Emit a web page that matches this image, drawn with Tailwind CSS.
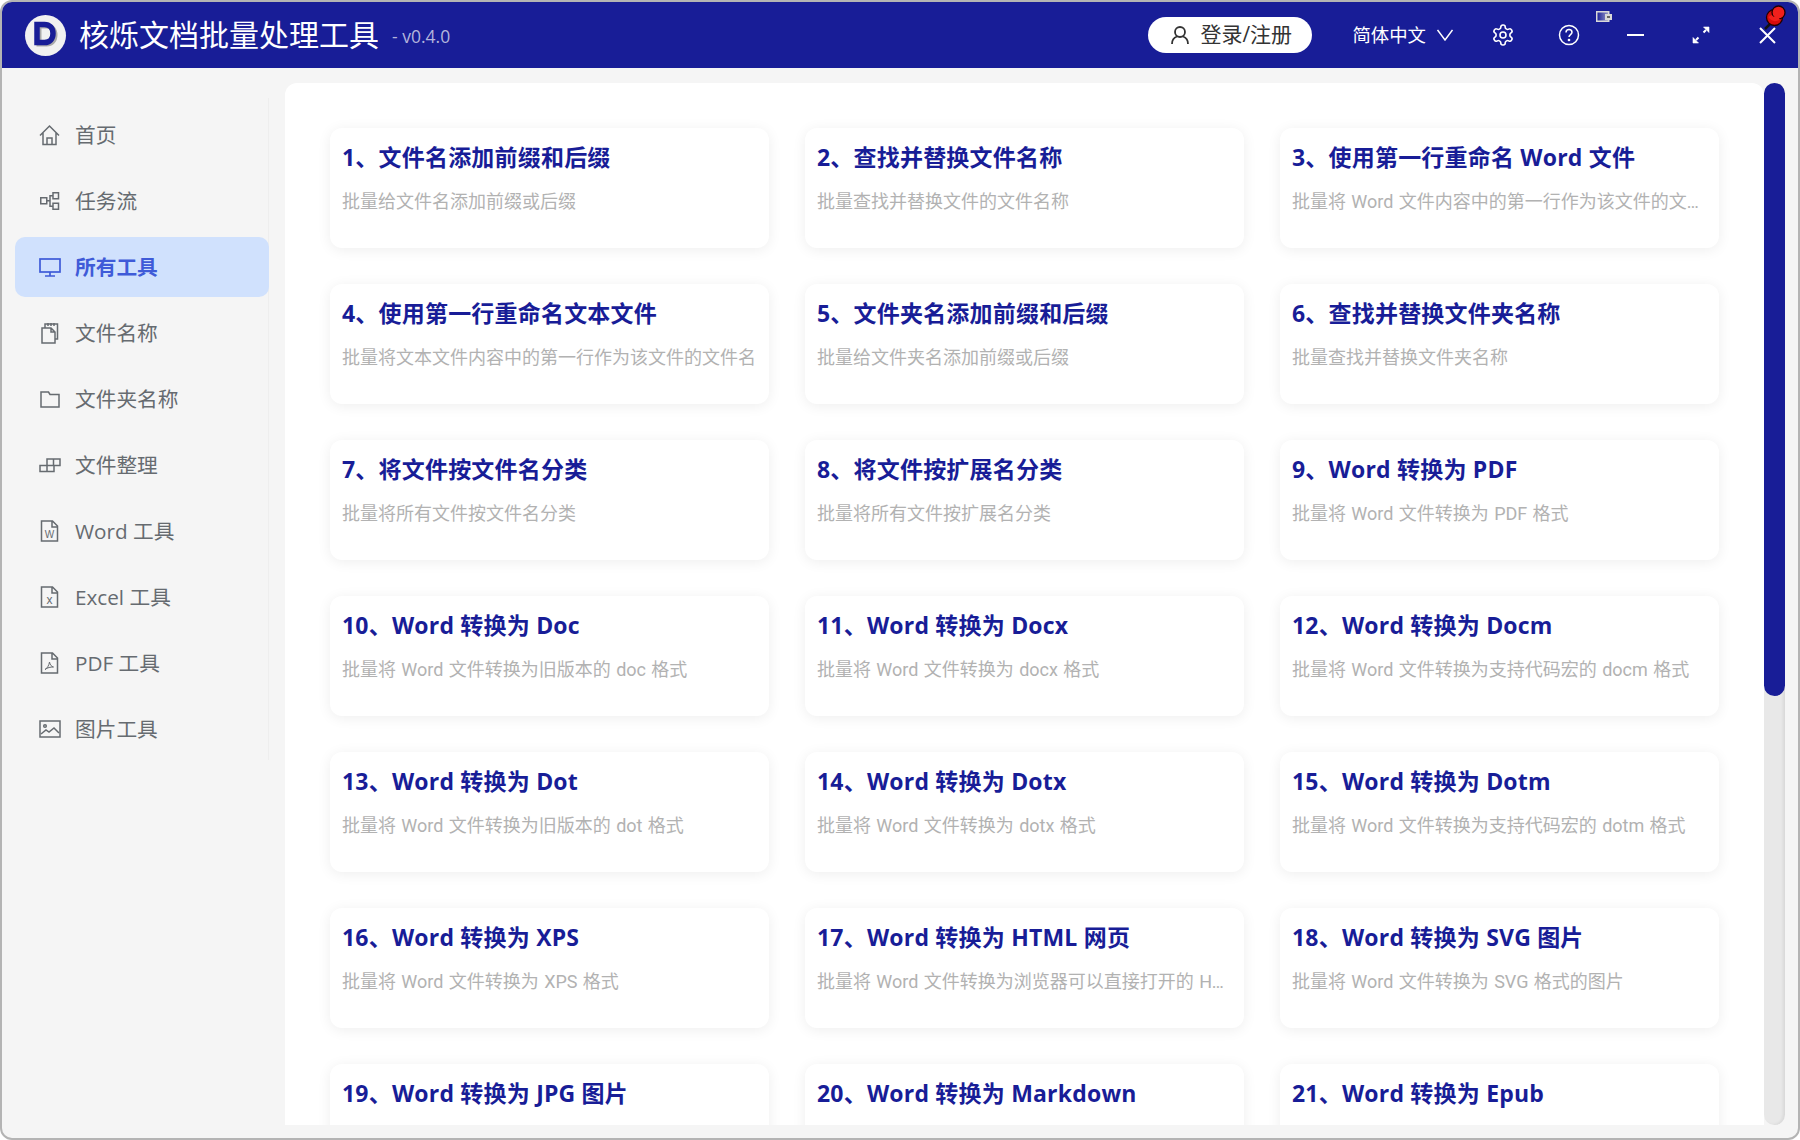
<!DOCTYPE html>
<html lang="zh-CN">
<head>
<meta charset="UTF-8">
<title>核烁文档批量处理工具</title>
<script src="https://cdn.jsdelivr.net/npm/@tailwindcss/browser@4"></script>
</head>
<body class="bg-white">
<div class="relative w-[1800px] h-[1140px] flex flex-col overflow-hidden rounded-[12px] border-2 border-[#b4b4b4] bg-[#f5f5f5] font-['Open_Sans','Noto_Sans_CJK_SC',sans-serif]">

  <!-- title bar -->
  <header class="h-[66px] shrink-0 flex items-center bg-[#181d97] text-white">
    <div class="ml-[23px] w-[41px] h-[41px] rounded-full bg-[#f1f1f1] flex items-center justify-center">
      <svg width="26" height="28" viewBox="0 0 26 28"><path d="M6 5h7.5c5.200 0 8.500 3.600 8.500 9s-3.300 9-8.500 9H6z" fill="none" stroke="#aaa" stroke-width="5"/><path d="M4 3.500h7.500c5.200 0 8.500 3.600 8.500 9s-3.300 9-8.500 9H4z" fill="none" stroke="#181d97" stroke-width="5.500"/></svg>
    </div>
    <h1 class="ml-[13px] text-[30px] leading-[40px] font-normal">核烁文档批量处理工具</h1>
    <span class="ml-[13px] mt-[3px] text-[17.500px] text-[#b3b5dc]">- v0.4.0</span>

    <div class="ml-auto flex items-center">
      <button class="w-[164px] h-[36px] rounded-full bg-white flex items-center pl-[23px] gap-[11px] text-[#333] text-[21px]">
        <svg width="18" height="18" viewBox="0 0 18 18" fill="none" stroke="#333" stroke-width="1.800"><circle cx="9" cy="6" r="5"/><path d="M1 18c0-4 2-6.500 5-7.500M17 18c0-4-2-6.500-5-7.500"/></svg>
        <span>登录/注册</span>
      </button>
      <div class="ml-[40px] flex items-center text-[18.400px]">
        <span>简体中文</span>
        <svg class="ml-[11px] mr-[17px]" width="16" height="16" viewBox="0 0 16 16" fill="none" stroke="#fff" stroke-width="1.500"><path d="M.5 3 8 13l7.500-10"/></svg>
      </div>
      <div class="w-[66px] flex justify-center">
        <svg width="24" height="24" viewBox="0 0 24 24" fill="none" stroke="#fff" stroke-width="1.600"><path d="M12.220 2h-.44a2 2 0 0 0-2 2v.18a2 2 0 0 1-1 1.730l-.43.25a2 2 0 0 1-2 0l-.15-.08a2 2 0 0 0-2.730.73l-.22.38a2 2 0 0 0 .73 2.730l.15.1a2 2 0 0 1 1 1.720v.51a2 2 0 0 1-1 1.740l-.15.09a2 2 0 0 0-.73 2.730l.22.38a2 2 0 0 0 2.730.73l.15-.08a2 2 0 0 1 2 0l.43.25a2 2 0 0 1 1 1.730V20a2 2 0 0 0 2 2h.44a2 2 0 0 0 2-2v-.18a2 2 0 0 1 1-1.730l.43-.25a2 2 0 0 1 2 0l.15.08a2 2 0 0 0 2.730-.73l.22-.39a2 2 0 0 0-.73-2.730l-.15-.08a2 2 0 0 1-1-1.740v-.5a2 2 0 0 1 1-1.740l.15-.09a2 2 0 0 0 .73-2.730l-.22-.38a2 2 0 0 0-2.730-.73l-.15.08a2 2 0 0 1-2 0l-.43-.25a2 2 0 0 1-1-1.730V4a2 2 0 0 0-2-2z"/><circle cx="12" cy="12" r="3"/></svg>
      </div>
      <div class="w-[66px] flex justify-center">
        <svg width="22" height="22" viewBox="0 0 22 22" fill="none" stroke="#fff" stroke-width="1.500"><circle cx="11" cy="11" r="9.500"/><path d="M8 8.500c0-1.800 1.400-3 3-3s3 1.200 3 2.800c0 2.200-3 2.400-3 4.700"/><circle cx="11" cy="16" r=".6" fill="#fff"/></svg>
      </div>
      <div class="w-[66px] flex justify-center">
        <svg width="17" height="18" viewBox="0 0 17 18" stroke="#fff" stroke-width="2"><path d="M0 9h17"/></svg>
      </div>
      <div class="w-[66px] flex justify-center">
        <svg width="18" height="18" viewBox="0 0 18 18" fill="#fff" stroke="#fff"><path d="M11.500 6.500 14 4M6.500 11.500 4 14" fill="none" stroke-width="2"/><path d="M17 1v5.500L11.500 1zM1 17v-5.500L6.500 17z" stroke-width=".6"/></svg>
      </div>
      <div class="w-[64px] pl-[2px] flex justify-center">
        <svg width="17" height="17" viewBox="0 0 17 17" stroke="#fff" stroke-width="2"><path d="M1 1l15 15M16 1 1 16"/></svg>
      </div>
    </div>
  </header>

  <!-- window snap widget and pin sit over the title bar -->
  <svg class="absolute left-[1594px] top-[9px]" width="16" height="11" viewBox="0 0 16 11">
    <defs><linearGradient id="snap"><stop offset="0" stop-color="#181d97"/><stop offset="1" stop-color="#9a9cc8"/></linearGradient></defs>
    <rect x=".75" y=".75" width="12" height="9.500" fill="url(#snap)" stroke="#d8d8d8" stroke-width="1.500"/>
    <rect x="9" y="3" width="7" height="6" fill="#d8d8d8"/>
    <rect x="11" y="5" width="3" height="2" fill="#666"/>
  </svg>
  <svg class="absolute left-[1761px] top-[2px]" width="24" height="26" viewBox="0 0 24 26">
    <path d="M2 25l5-5" stroke="#111" stroke-width="2.500"/>
    <circle cx="11.500" cy="13.500" r="8" fill="#d80c0c" stroke="#200" stroke-width="1.300"/>
    <circle cx="15.500" cy="8.500" r="6.500" fill="#f2201c" stroke="#200" stroke-width="1.300"/>
    <path d="M7 12c2 3 5 4 9 2" fill="none" stroke="#f2201c" stroke-width="4"/>
  </svg>

  <main class="flex-1 flex min-h-0">
    <!-- sidebar -->
    <aside class="w-[283px] shrink-0 pt-[30px] pl-[13px] pr-[16px]">
      <nav class="h-[662px] border-r border-[#eeeeee] pt-[7px] flex flex-col gap-[6px] text-[20.700px] text-[#666b70]">
        <a class="h-[60px] flex items-center pl-[24px] gap-[14px]">
          <svg class="w-[22px] h-[22px]" viewBox="0 0 22 22" fill="none" stroke="#666b70" stroke-width="1.500"><path d="M1 11.500 10.500 2l9.500 9.500M4 9v11.500h13V9M8 20.500V14h5v6.500"/></svg>
          <span class="pt-[2px]">首页</span>
        </a>
        <a class="h-[60px] flex items-center pl-[24px] gap-[14px]">
          <svg class="w-[22px] h-[22px]" viewBox="0 0 22 22" fill="none" stroke="#666b70" stroke-width="1.500"><rect x="1.750" y="7.750" width="6" height="6"/><rect x="14" y="2.750" width="5.500" height="6"/><rect x="14" y="13.250" width="5.500" height="6"/><path d="M8 10.750h3V5.750h3M11 10.750v5.500h3"/></svg>
          <span class="pt-[2px]">任务流</span>
        </a>
        <a class="h-[60px] -mr-[1px] flex items-center pl-[24px] gap-[14px] rounded-[10px] bg-[#d0e1fd] text-[#3f5bd8] font-bold">
          <svg class="w-[22px] h-[22px]" viewBox="0 0 22 22" fill="none" stroke="#3f5bd8" stroke-width="1.700"><rect x="1" y="3" width="20" height="13"/><path d="M11 16v4M6 20h10"/></svg>
          <span class="pt-[2px]">所有工具</span>
        </a>
        <a class="h-[60px] flex items-center pl-[24px] gap-[14px]">
          <svg class="w-[22px] h-[22px]" viewBox="0 0 22 22" fill="none" stroke="#666b70" stroke-width="1.500"><path d="M3 6h9l4 4v11H3zM12 6v4h4M6 6V2h12.500v15H16M9 1v3M12 1v3M15 1v3"/></svg>
          <span class="pt-[2px]">文件名称</span>
        </a>
        <a class="h-[60px] flex items-center pl-[24px] gap-[14px]">
          <svg class="w-[22px] h-[22px]" viewBox="0 0 22 22" fill="none" stroke="#666b70" stroke-width="1.500"><path d="M2 4h7.500l1.500 2.500h9v12.500H2z"/></svg>
          <span class="pt-[2px]">文件夹名称</span>
        </a>
        <a class="h-[60px] flex items-center pl-[24px] gap-[14px]">
          <svg class="w-[22px] h-[22px]" viewBox="0 0 22 22" fill="none" stroke="#666b70" stroke-width="1.500"><path d="M1 11.500h14v6H1zM8 11.500v6M8 11.500V5h13v6.500h-6M14.500 5v6.500"/></svg>
          <span class="pt-[2px]">文件整理</span>
        </a>
        <a class="h-[60px] flex items-center pl-[24px] gap-[14px]">
          <svg class="w-[22px] h-[22px]" viewBox="0 0 22 22" fill="none" stroke="#666b70" stroke-width="1.500"><path d="M2.500 1h11l5 5v15h-16zM13 1v6h5.500"/><text x="10.500" y="17.500" text-anchor="middle" font-size="10" font-family="Liberation Sans" fill="#666b70" stroke="none">W</text></svg>
          <span class="pt-[2px]">Word 工具</span>
        </a>
        <a class="h-[60px] flex items-center pl-[24px] gap-[14px]">
          <svg class="w-[22px] h-[22px]" viewBox="0 0 22 22" fill="none" stroke="#666b70" stroke-width="1.500"><path d="M2.500 1h11l5 5v15h-16zM13 1v6h5.500"/><text x="10.500" y="17.500" text-anchor="middle" font-size="12" font-family="Liberation Sans" fill="#666b70" stroke="none">x</text></svg>
          <span class="pt-[2px]">Excel 工具</span>
        </a>
        <a class="h-[60px] flex items-center pl-[24px] gap-[14px]">
          <svg class="w-[22px] h-[22px]" viewBox="0 0 22 22" fill="none" stroke="#666b70" stroke-width="1.500"><path d="M2.500 1h11l5 5v15h-16zM13 1v6h5.500"/><path d="M6 17.500c2-1 4-4 4.500-7.500.5 3 2 4.500 4 5-3 0-6 .5-8.500 2.500z" stroke-width="1"/></svg>
          <span class="pt-[2px]">PDF 工具</span>
        </a>
        <a class="h-[60px] flex items-center pl-[24px] gap-[14px]">
          <svg class="w-[22px] h-[22px]" viewBox="0 0 22 22" fill="none" stroke="#666b70" stroke-width="1.500"><rect x="1" y="3" width="20" height="16"/><circle cx="6" cy="8" r="1.300"/><path d="m2 16 5-4 3 2 5-4 5 5"/></svg>
          <span class="pt-[2px]">图片工具</span>
        </a>
      </nav>
    </aside>

    <!-- tool cards -->
    <section class="flex-1 h-[1042px] mt-[15px] rounded-t-[12px] bg-white overflow-hidden pl-[45px] pt-[45px]">
      <div id="cards" class="grid grid-cols-[439px_439px_439px] gap-x-[36px] gap-y-[36px]"></div>
    </section>

    <!-- scrollbar -->
    <div class="w-[21px] h-[1042px] mt-[15px] mr-[13px] shrink-0 rounded-full bg-[#e8e8e8] shadow-[inset_-2px_0_3px_rgba(0,0,0,0.07)]">
      <div class="h-[613px] rounded-full bg-[#181d97]"></div>
    </div>
  </main>
</div>

<script>
  const tools = [
    ['1、文件名添加前缀和后缀', '批量给文件名添加前缀或后缀'],
    ['2、查找并替换文件名称', '批量查找并替换文件的文件名称'],
    ['3、使用第一行重命名 Word 文件', '批量将 Word 文件内容中的第一行作为该文件的文件名'],
    ['4、使用第一行重命名文本文件', '批量将文本文件内容中的第一行作为该文件的文件名'],
    ['5、文件夹名添加前缀和后缀', '批量给文件夹名添加前缀或后缀'],
    ['6、查找并替换文件夹名称', '批量查找并替换文件夹名称'],
    ['7、将文件按文件名分类', '批量将所有文件按文件名分类'],
    ['8、将文件按扩展名分类', '批量将所有文件按扩展名分类'],
    ['9、Word 转换为 PDF', '批量将 Word 文件转换为 PDF 格式'],
    ['10、Word 转换为 Doc', '批量将 Word 文件转换为旧版本的 doc 格式'],
    ['11、Word 转换为 Docx', '批量将 Word 文件转换为 docx 格式'],
    ['12、Word 转换为 Docm', '批量将 Word 文件转换为支持代码宏的 docm 格式'],
    ['13、Word 转换为 Dot', '批量将 Word 文件转换为旧版本的 dot 格式'],
    ['14、Word 转换为 Dotx', '批量将 Word 文件转换为 dotx 格式'],
    ['15、Word 转换为 Dotm', '批量将 Word 文件转换为支持代码宏的 dotm 格式'],
    ['16、Word 转换为 XPS', '批量将 Word 文件转换为 XPS 格式'],
    ['17、Word 转换为 HTML 网页', '批量将 Word 文件转换为浏览器可以直接打开的 HTML 网页'],
    ['18、Word 转换为 SVG 图片', '批量将 Word 文件转换为 SVG 格式的图片'],
    ['19、Word 转换为 JPG 图片', '批量将 Word 文件转换为 JPG 格式的图片'],
    ['20、Word 转换为 Markdown', '批量将 Word 文件转换为 Markdown 格式'],
    ['21、Word 转换为 Epub', '批量将 Word 文件转换为 Epub 格式']
  ];

  document.getElementById('cards').innerHTML = tools.map(([title, desc]) => `
    <div class="h-[120px] rounded-[12px] bg-white px-[12px] pt-[13px] shadow-[0_2px_14px_rgba(0,0,0,0.07)]">
      <h3 class="text-[23px] leading-[32px] tracking-[0.2px] font-bold text-[#181d97]">${title}</h3>
      <p class="mt-[15px] text-[18px] leading-[28px] text-[#b2b2b2] truncate [word-spacing:0.9px] font-['Roboto','Noto_Sans_CJK_SC',sans-serif]">${desc}</p>
    </div>`).join('');
</script>
</body>
</html>
